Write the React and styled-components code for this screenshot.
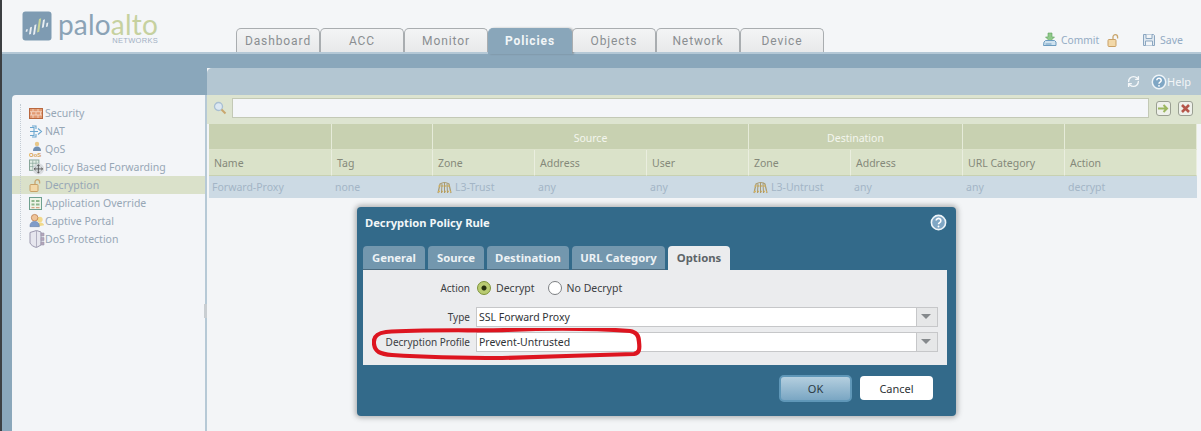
import React from 'react';
import styled, { createGlobalStyle } from 'styled-components';
import { RefreshCw } from 'lucide-react';

const GlobalStyle = createGlobalStyle`
  html, body { margin: 0; padding: 0; background: #f3f5f7; }
  * { box-sizing: border-box; }
`;

const TOP_TABS = ['Dashboard', 'ACC', 'Monitor', 'Policies', 'Objects', 'Network', 'Device'];
const COLUMN_HEADS = ['Name', 'Tag', 'Zone', 'Address', 'User', 'Zone', 'Address', 'URL Category', 'Action'];
const MODAL_TABS = [
  { label: 'General', width: 62 },
  { label: 'Source', width: 56 },
  { label: 'Destination', width: 82 },
  { label: 'URL Category', width: 93 },
  { label: 'Options', width: 62 },
];

const LogoMark = () => (
  <svg width="30" height="30" viewBox="0 0 30 30">
    <rect x="0.5" y="0.5" width="29" height="29" rx="3" fill="#7e9bb2" />
    <g fill="#e9eef2">
      <path d="M4 18.500l1.800-.6-.4 2.600-1.700.5z" />
      <path d="M8 16.500l2-.7-1 7.200-2 .6z" />
      <path d="M12.500 14l2-.7-1.500 10-2 .6z" />
      <path d="M21 9l2-.7-1.200 8-2 .6z" />
      <path d="M24.500 12l1.800-.6-.6 4.200-1.800.5z" />
    </g>
    <path d="M17 8l2.200-.8-2 13.500-2.200.7z" fill="#c9d59a" />
  </svg>
);

const CommitIcon = () => (
  <svg width="16" height="16" viewBox="0 0 16 16">
    <path d="M6 1h4v4h2.500L8 9.500 3.500 5H6z" fill="#8fc98a" stroke="#5ea35a" strokeWidth=".6" />
    <path d="M2 10l1.500-1.500h9L14 10v3.500H1.500z" fill="#cfe2ef" stroke="#6c9cc0" />
    <path d="M3.500 12h6" stroke="#6c9cc0" />
  </svg>
);

const LockIcon = ({ size = 13 }) => (
  <svg width={size} height={size} viewBox="0 0 13 13">
    <path d="M6 5V3a2.300 2.300 0 0 1 4.600 0v1.500" fill="none" stroke="#c9a66e" strokeWidth="1.300" />
    <rect x="1" y="5.500" width="8" height="7" rx="1" fill="#f2d8a8" stroke="#c9a066" />
  </svg>
);

const SaveIcon = () => (
  <svg width="14" height="14" viewBox="0 0 14 14" fill="none" stroke="#8ba6c0">
    <path d="M1.500 1.500h10l1 1v10h-11z" fill="#dfe8f0" />
    <path d="M4 1.500v4h6v-4M3.500 12.500v-4.500h7v4.500" fill="#f3f5f7" />
  </svg>
);

const HelpIcon = ({ size = 16 }) => (
  <svg width={size} height={size} viewBox="0 0 16 16">
    <circle cx="8" cy="8" r="6.700" fill="#7fa6c4" stroke="#eef4f8" strokeWidth="1.500" />
    <path d="M5.800 6.200a2.200 2.100 0 1 1 3.300 1.900c-.8.500-1.100.8-1.100 1.600" fill="none" stroke="#fff" strokeWidth="1.500" />
    <circle cx="8" cy="11.800" r=".9" fill="#fff" />
  </svg>
);

const SearchIcon = () => (
  <svg width="14" height="14" viewBox="0 0 14 14">
    <circle cx="5.500" cy="5.500" r="4" fill="#dce8f2" stroke="#a9bfd2" strokeWidth="1.300" />
    <path d="M8.500 8.500l4 4" stroke="#c9a66e" strokeWidth="2" />
  </svg>
);

const GoIcon = () => (
  <svg width="11" height="9" viewBox="0 0 11 9" fill="none" stroke="#9cb75f" strokeWidth="2">
    <path d="M0 4.500h8M5.500 1l3.500 3.500L5.500 8" />
  </svg>
);

const ClearIcon = () => (
  <svg width="9" height="9" viewBox="0 0 9 9" fill="none" stroke="#b5564a" strokeWidth="2.600">
    <path d="M1 1l7 7M8 1L1 8" />
  </svg>
);

const ZoneIcon = () => (
  <svg width="15" height="13" viewBox="0 0 15 13" fill="none">
    <path d="M1 12L3 3c3-2 6-2 9 0l2 9" stroke="#a99a6e" strokeWidth="1.200" />
    <path d="M1.500 5h12M1 10.500h13" stroke="#d8b45f" strokeWidth="1.600" strokeDasharray="2 1" />
    <path d="M5 2.500L4.500 12M7.500 2v10M10 2.500l.5 9.500" stroke="#a99a6e" />
  </svg>
);

const SecurityIcon = () => (
  <svg width="14" height="11" viewBox="0 0 14 11">
    <rect x=".5" y=".5" width="13" height="10" fill="#e29a72" stroke="#b9683f" />
    <path d="M1 3.700h12M1 7h12M4 1v2.500M9 1v2.500M2.500 4v3M7 4v3M11.500 4v3M4 7v3M9 7v3" stroke="#f6dccb" strokeWidth=".8" />
  </svg>
);

const NatIcon = () => (
  <svg width="14" height="13" viewBox="0 0 14 13" fill="none" stroke="#6aa6cf" strokeWidth="1.100">
    <path d="M1 2.500h4v8H1M1 6.500h8M9 3.500l3.500 3-3.500 3" />
    <path d="M3 1h4v3M3 12h4V9" />
  </svg>
);

const QosIcon = () => (
  <svg width="16" height="16" viewBox="0 0 16 16">
    <circle cx="8" cy="3" r="2.200" fill="#e8c788" />
    <path d="M4 10c0-3 1.500-4.500 4-4.500S12 7 12 10z" fill="#6f8fb2" />
    <text x="0" y="15.500" fontFamily="'Liberation Sans', sans-serif" fontSize="6" fontWeight="700" fill="#d9a252">QoS</text>
  </svg>
);

const ForwardIcon = () => (
  <svg width="17" height="17" viewBox="0 0 17 17">
    <rect x=".5" y=".5" width="10" height="11" fill="#e4eee6" stroke="#83a295" />
    <path d="M.5 4h10M.5 7.500h10M4 1v10M7.500 1v10" stroke="#83a295" strokeWidth=".7" />
    <circle cx="10" cy="10" r="6" fill="#d3d7da" opacity=".85" />
    <path d="M10 5.500v9M5.500 10h9M8.700 7L10 5.500 11.300 7M8.700 13l1.300 1.500 1.300-1.500M7 8.700L5.500 10 7 11.300M13 8.700l1.500 1.300-1.500 1.300" fill="none" stroke="#444" strokeWidth=".8" />
  </svg>
);

const OverrideIcon = () => (
  <svg width="13" height="13" viewBox="0 0 13 13">
    <rect x=".5" y=".5" width="12" height="12" fill="#eef4e8" stroke="#6fa08f" />
    <path d="M2.500 3h3v2h-3zM7 3h3.500v2H7zM2.500 6.500h3v2h-3zM7 6.500h3.500v2H7z" fill="#8fb78e" />
    <path d="M2.500 10h3v1.200h-3zM7 10h3.500v1.200H7z" fill="#d6a283" />
  </svg>
);

const PortalIcon = () => (
  <svg width="17" height="16" viewBox="0 0 17 16">
    <circle cx="11.500" cy="6.500" r="3" fill="#f2d98d" />
    <path d="M8 14c0-3 1.500-4.500 4-4.500s4 1.500 4 3z" fill="#f0d98a" />
    <circle cx="6" cy="4.500" r="3.500" fill="#efc49a" stroke="#b9794a" strokeWidth=".8" />
    <path d="M1 14c0-4 2-5.500 5-5.500s5 1.500 5 5.500z" fill="#7f9cc9" stroke="#667fa8" strokeWidth=".6" />
  </svg>
);

const DosIcon = () => (
  <svg width="16" height="18" viewBox="0 0 16 18">
    <path d="M1 2.500L7.500.5 12 2v13l-4.500 2.500C4 16.500 2 15 1 13z" fill="#e6e6ee" stroke="#9b98ae" />
    <path d="M12 3h3v3h-3zM12 7.500h3v3h-3zM12 12h3v3h-3z" fill="#b6a5ba" stroke="#9b98ae" strokeWidth=".6" />
    <path d="M7.500 1v16" stroke="#9b98ae" strokeWidth=".7" />
  </svg>
);

const SIDE_ITEMS = [
  { label: 'Security', icon: <SecurityIcon /> },
  { label: 'NAT', icon: <NatIcon /> },
  { label: 'QoS', icon: <QosIcon /> },
  { label: 'Policy Based Forwarding', icon: <ForwardIcon /> },
  { label: 'Decryption', icon: <LockIcon />, active: true },
  { label: 'Application Override', icon: <OverrideIcon /> },
  { label: 'Captive Portal', icon: <PortalIcon /> },
  { label: 'DoS Protection', icon: <DosIcon /> },
];

const App = () => (
  <Page>
    <GlobalStyle />
    <Header>
      <Logo>
        <LogoMark />
        <Wordmark>
          <Brand>
            palo<BrandAccent>alto</BrandAccent>
          </Brand>
          <BrandSub>NETWORKS</BrandSub>
        </Wordmark>
      </Logo>
      <TopTabs>
        {TOP_TABS.map((tab) => (
          <TopTab key={tab} $active={tab === 'Policies'}>
            {tab}
          </TopTab>
        ))}
      </TopTabs>
      <HeaderActions>
        <HeaderAction>
          <CommitIcon />
          Commit
        </HeaderAction>
        <LockIcon />
        <HeaderAction $save>
          <SaveIcon />
          Save
        </HeaderAction>
      </HeaderActions>
    </Header>
    <Body>
      <SideColumn>
        <Sidebar>
          <Tree>
            {SIDE_ITEMS.map((item) => (
              <TreeItem key={item.label} $active={item.active}>
                <TreeIcon>{item.icon}</TreeIcon>
                {item.label}
              </TreeItem>
            ))}
          </Tree>
          <CollapseHandle />
        </Sidebar>
      </SideColumn>
      <Main>
        <Toolbar>
          <RefreshCw size={13} color="#f4f7f9" strokeWidth={2.6} />
          <HelpLink>
            <HelpIcon />
            Help
          </HelpLink>
        </Toolbar>
        <SearchBar>
          <SearchIcon />
          <SearchInput />
          <SquareButton>
            <GoIcon />
          </SquareButton>
          <SquareButton>
            <ClearIcon />
          </SquareButton>
        </SearchBar>
        <RuleTable>
          <GroupCell $span={1} />
          <GroupCell $span={1} />
          <GroupCell $span={3}>Source</GroupCell>
          <GroupCell $span={2}>Destination</GroupCell>
          <GroupCell $span={1} />
          <GroupCell $span={1} />
          {COLUMN_HEADS.map((head, i) => (
            <HeadCell key={i}>{head}</HeadCell>
          ))}
          <DataCell>Forward-Proxy</DataCell>
          <DataCell>none</DataCell>
          <DataCell $zone>
            <ZoneIcon />
            L3-Trust
          </DataCell>
          <DataCell>any</DataCell>
          <DataCell>any</DataCell>
          <DataCell $zone>
            <ZoneIcon />
            L3-Untrust
          </DataCell>
          <DataCell>any</DataCell>
          <DataCell>any</DataCell>
          <DataCell>decrypt</DataCell>
        </RuleTable>
      </Main>
    </Body>
    <Modal>
      <ModalTitle>
        Decryption Policy Rule
        <HelpIcon size={17} />
      </ModalTitle>
      <ModalTabs>
        {MODAL_TABS.map((tab) => (
          <ModalTab key={tab.label} $width={tab.width} $active={tab.label === 'Options'}>
            {tab.label}
          </ModalTab>
        ))}
      </ModalTabs>
      <ModalPanel>
        <FormRow>
          <FormLabel>Action</FormLabel>
          <Radio $checked />
          <RadioText>Decrypt</RadioText>
          <Radio />
          <RadioText>No Decrypt</RadioText>
        </FormRow>
        <FormRow>
          <FormLabel>Type</FormLabel>
          <Select>
            <SelectValue>SSL Forward Proxy</SelectValue>
            <SelectArrow />
          </Select>
        </FormRow>
        <FormRow>
          <FormLabel>Decryption Profile</FormLabel>
          <Select>
            <SelectValue>Prevent-Untrusted</SelectValue>
            <SelectArrow />
          </Select>
        </FormRow>
      </ModalPanel>
      <ModalFooter>
        <OkButton>OK</OkButton>
        <CancelButton>Cancel</CancelButton>
      </ModalFooter>
      <Scribble width="272" height="34" viewBox="0 0 272 34">
        <path
          d="M2 16C1 8 6 5 14 4 50 1 110 3 135 2c45-2 95-1 123 1 7 1 9 5 9 11 1 8 0 11-5 12-42 1-92 3-132 4-40 0-80-1-110-3C8 26 3 24 2 16z"
          fill="none"
          stroke="#dd1520"
          strokeWidth="4.200"
        />
      </Scribble>
    </Modal>
  </Page>
);

const Page = styled.div`
  position: relative;
  width: 1201px;
  height: 431px;
  overflow: hidden;
  display: flex;
  flex-direction: column;
  border-left: 2px solid #3c3f42;
  background: #f3f5f7;
  font-family: 'Noto Sans', 'DejaVu Sans', sans-serif;
  font-size: 10.5px;
`;

const Header = styled.header`
  height: 54px;
  flex: none;
  display: flex;
  align-items: flex-start;
  border-bottom: 2px solid #b4c8d6;
  background: #f4f6f8;
  padding: 11px 0 0 20px;
`;

const Logo = styled.div`
  width: 214px;
  display: flex;
  gap: 6px;
`;

const Wordmark = styled.div`
  display: flex;
  flex-direction: column;
  align-items: flex-end;
  width: 100px;
`;

const Brand = styled.div`
  font-family: 'Lato', sans-serif;
  font-size: 28px;
  line-height: 26px;
  color: #8ba3b6;
  letter-spacing: 0.2px;
  white-space: nowrap;
`;

const BrandAccent = styled.span`
  color: #c6d19f;
`;

const BrandSub = styled.div`
  font-family: 'Liberation Sans', sans-serif;
  font-size: 7.500px;
  line-height: 8px;
  color: #a2b0c4;
  letter-spacing: 0.3px;
`;

const TopTabs = styled.nav`
  display: flex;
  margin-top: 17px;
  margin-right: auto;
`;

const TopTab = styled.div`
  width: 84px;
  height: ${(p) => (p.$active ? '26px' : '24px')};
  display: flex;
  align-items: center;
  justify-content: center;
  padding-bottom: ${(p) => (p.$active ? '2px' : '0')};
  border: 1px solid ${(p) => (p.$active ? '#8aa7bb' : '#a9adb0')};
  border-bottom: none;
  border-radius: 5px 5px 0 0;
  background: ${(p) => (p.$active ? '#89a6ba' : 'linear-gradient(#f3f4f5, #e8e9ea)')};
  box-shadow: ${(p) => (p.$active ? '2px 0 2px rgba(70, 70, 70, 0.4)' : 'none')};
  color: ${(p) => (p.$active ? '#f2f6f8' : '#8a8e91')};
  font-family: 'Roboto', sans-serif;
  font-weight: ${(p) => (p.$active ? 700 : 400)};
  font-size: 12px;
  letter-spacing: 0.9px;
  z-index: 1;
`;

const HeaderActions = styled.div`
  display: flex;
  align-items: center;
  margin: 21px 18px 0 0;
  gap: 8px;
  color: #93abc4;
`;

const HeaderAction = styled.div`
  display: flex;
  align-items: center;
  gap: ${(p) => (p.$save ? '4px' : '3px')};
  font-size: ${(p) => (p.$save ? '10.5px' : '10.200px')};
  margin-left: ${(p) => (p.$save ? '14px' : '0')};
`;

const Body = styled.div`
  flex: 1;
  min-height: 0;
  display: flex;
`;

const SideColumn = styled.div`
  width: 205px;
  flex: none;
  padding: 41px 0 0 10px;
  background: #8aa7bb;
`;

const Sidebar = styled.aside`
  position: relative;
  height: 100%;
  border-right: 2px solid #b6c9d6;
  border-radius: 4px 0 0 0;
  background: #f3f5f8;
  padding-top: 9px;
`;

const Tree = styled.ul`
  position: relative;
  list-style: none;
  margin: 0;
  padding: 0;
  color: #97a7b6;
  &::before {
    content: '';
    position: absolute;
    left: 8px;
    top: 0;
    bottom: 8px;
    border-left: 1px dotted #c3ccd4;
  }
`;

const TreeItem = styled.li`
  height: 18px;
  display: flex;
  align-items: center;
  padding-left: 17px;
  background: ${(p) => (p.$active ? '#dae1ca' : 'transparent')};
`;

const TreeIcon = styled.span`
  width: 16px;
  height: 18px;
  flex: none;
  display: flex;
  align-items: center;
  justify-content: flex-start;
`;

const CollapseHandle = styled.div`
  position: absolute;
  right: -2px;
  top: 209px;
  width: 3px;
  height: 14px;
  background: #c9ced2;
`;

const Main = styled.main`
  flex: 1;
  min-width: 0;
  display: flex;
  flex-direction: column;
  background: linear-gradient(#8aa7bb 14px, #f3f5f7 14px);
  padding-top: 14px;
`;

const Toolbar = styled.div`
  height: 27px;
  flex: none;
  display: flex;
  align-items: center;
  justify-content: flex-end;
  gap: 11px;
  padding-right: 10px;
  border-radius: 5px 0 0 0;
  background: #b3c6d2;
`;

const HelpLink = styled.div`
  display: flex;
  align-items: center;
  color: #f2f5f7;
  font-size: 11px;
`;

const SearchBar = styled.div`
  height: 29px;
  flex: none;
  display: flex;
  align-items: flex-start;
  padding: 3px 8px 0 6px;
  gap: 5px;
  background: #dde4d0;
  & > svg {
    margin: 3px 0 0;
  }
`;

const SearchInput = styled.div`
  flex: 1;
  height: 20px;
  border: 1px solid #c3c9b6;
  background: #f4f6f9;
`;

const SquareButton = styled.div`
  width: 15px;
  height: 15px;
  margin: 3px 0 0 2px;
  display: flex;
  align-items: center;
  justify-content: center;
  border: 1px solid #9a9f92;
  border-radius: 3px;
  background: #eef0ea;
`;

const RuleTable = styled.div`
  display: grid;
  grid-template-columns: 123px 101px 102px 112px 102px 102px 112px 102px 132px;
  grid-template-rows: 26px 26px 22px;
  margin-left: 2px;
  width: 990px;
`;

const GroupCell = styled.div`
  grid-column: span ${(p) => p.$span};
  display: flex;
  align-items: center;
  justify-content: center;
  padding-top: 2px;
  background: #c8d1b1;
  border-right: 1px solid #e6ebd9;
  border-bottom: 1px solid #dde3cb;
  color: #f4f6ee;
`;

const HeadCell = styled.div`
  display: flex;
  align-items: center;
  padding-left: 5px;
  background: #dae2c9;
  border-right: 1px solid #eaeedf;
  border-bottom: 1px solid #c8d1b1;
  color: #85897a;
`;

const DataCell = styled.div`
  display: flex;
  align-items: center;
  gap: 3px;
  padding-left: ${(p) => (p.$zone ? '4px' : '3px')};
  background: #ccdae4;
  color: #a3b5c6;
`;

const Modal = styled.section`
  position: absolute;
  left: 355px;
  top: 207px;
  width: 599px;
  height: 209px;
  display: flex;
  flex-direction: column;
  padding: 0 9px 0 6px;
  border-radius: 4px;
  background: #336a8a;
  box-shadow: 0 0 5px 2px rgba(60, 60, 60, 0.35);
`;

const ModalTitle = styled.div`
  height: 39px;
  flex: none;
  display: flex;
  align-items: center;
  justify-content: space-between;
  padding: 0 0 9px 2px;
  color: #f1f6f8;
  font-weight: 700;
  font-size: 11.200px;
`;

const ModalTabs = styled.div`
  height: 24px;
  flex: none;
  display: flex;
  gap: 3px;
`;

const ModalTab = styled.div`
  width: ${(p) => p.$width}px;
  display: flex;
  align-items: center;
  justify-content: center;
  padding-bottom: 1px;
  border-radius: 4px 4px 0 0;
  background: ${(p) => (p.$active ? '#ebecee' : '#7397ae')};
  box-shadow: ${(p) => (p.$active ? 'none' : 'inset 0 -1px 0 #4c6a7e')};
  color: ${(p) => (p.$active ? '#5d6468' : '#edf2f5')};
  font-weight: 700;
  font-size: 11.300px;
`;

const ModalPanel = styled.div`
  height: 95px;
  flex: none;
  display: flex;
  flex-direction: column;
  gap: 5px;
  padding: 8px 9px 0 0;
  background: #ebecee;
  color: #3c4043;
  & > div:first-child {
    margin-bottom: 4px;
  }
`;

const FormRow = styled.div`
  height: 20px;
  display: flex;
  align-items: center;
`;

const FormLabel = styled.div`
  width: 107px;
  margin-right: 6px;
  text-align: right;
  font-size: 10px;
`;

const Radio = styled.span`
  width: 14px;
  height: 14px;
  margin: 0 5px 0 1px;
  border-radius: 50%;
  border: 1px solid ${(p) => (p.$checked ? '#7c9236' : '#7c7f82')};
  background: ${(p) =>
    p.$checked ? 'radial-gradient(circle, #26300d 0 2px, #b9cb72 3px)' : '#fff'};
`;

const RadioText = styled.span`
  margin-right: 12px;
`;

const Select = styled.div`
  flex: 1;
  height: 20px;
  display: flex;
  border: 1px solid #c6c7c9;
  background: #fff;
`;

const SelectValue = styled.div`
  flex: 1;
  padding-left: 2px;
  line-height: 18px;
  color: #2f3336;
`;

const SelectArrow = styled.div`
  width: 21px;
  flex: none;
  position: relative;
  border-left: 1px solid #c6c7c9;
  background: #e6e7e8;
  &::after {
    content: '';
    position: absolute;
    left: 4px;
    top: 6px;
    border: 5px solid transparent;
    border-bottom: none;
    border-top: 5px solid #85898c;
  }
`;

const ModalFooter = styled.div`
  flex: 1;
  display: flex;
  justify-content: flex-end;
  align-items: flex-start;
  gap: 8px;
  padding: 10px 14px 0 0;
`;

const OkButton = styled.div`
  width: 73px;
  height: 27px;
  display: flex;
  align-items: center;
  justify-content: center;
  border: 2px solid #5f97b8;
  border-radius: 5px;
  background: linear-gradient(#b4cfdf, #7aa6c3);
  color: #2b3a44;
  font-size: 11px;
`;

const CancelButton = styled.div`
  width: 73px;
  height: 24px;
  margin-top: 1px;
  display: flex;
  align-items: center;
  justify-content: center;
  border-radius: 4px;
  background: #fff;
  color: #2f3336;
  font-size: 11px;
`;

const Scribble = styled.svg`
  position: absolute;
  left: 15px;
  top: 121px;
  pointer-events: none;
`;

export default App;
